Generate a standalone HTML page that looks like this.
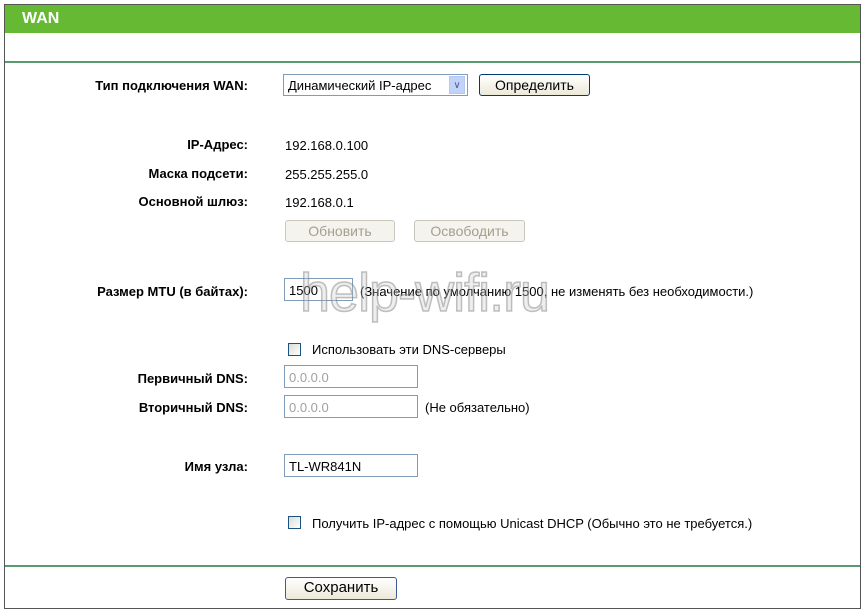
<!DOCTYPE html>
<html><head><meta charset="utf-8"><style>
body{margin:0;width:865px;height:612px;background:#fff;font-family:"Liberation Sans",Arial,sans-serif;font-size:13px;color:#000;position:relative;overflow:hidden}
.a{position:absolute}
.l{position:absolute;right:617px;font-weight:bold;text-align:right;white-space:nowrap}
.v{position:absolute;left:285px;white-space:nowrap}
.in{position:absolute;border:1px solid #7f9db9;background:#fff;box-sizing:border-box;height:23px;padding:4px 0 0 4px;white-space:nowrap}
.btn{position:absolute;box-sizing:border-box;border:1px solid #003c74;border-radius:3px;background:linear-gradient(#fff,#ece9d8);text-align:center;height:22px;line-height:20px;font-size:14px}
.dis{border-color:#c9c7ba;color:#a3a08e;background:#f4f3ee}
.cb{position:absolute;width:11px;height:11px;border:1px solid #1c5180;background:linear-gradient(135deg,#dcdcd6,#fff)}
</style></head><body>
<div class="a" style="left:4px;top:4px;width:855px;height:603px;border:1px solid #555"></div>
<div class="a" style="left:5px;top:5px;width:855px;height:28px;background:#66b933"></div>
<div class="a" style="left:22px;top:10px;color:#fff;font-weight:bold;font-size:16px">WAN</div>
<div class="a" style="left:5px;top:61px;width:855px;height:2px;background:#5a9a6e"></div>
<div class="a" style="left:5px;top:565px;width:855px;height:2px;background:#5a9a6e"></div>

<div class="l" style="top:78px">Тип подключения WAN:</div>
<div class="in" style="left:283px;top:74px;width:185px;height:22px;padding:3px 0 0 4px;font-size:13px">Динамический IP-адрес</div>
<div class="a" style="left:449px;top:76px;width:16px;height:18px;background:#c1d3fb;border:1px solid #b4c8f6;box-sizing:border-box;text-align:center;color:#4d6185;font-size:10px;line-height:17px">&#x2228;</div>
<div class="btn" style="left:479px;top:74px;width:111px">Определить</div>

<div class="l" style="top:137px">IP-Адрес:</div><div class="v" style="top:138px">192.168.0.100</div>
<div class="l" style="top:166px">Маска подсети:</div><div class="v" style="top:167px">255.255.255.0</div>
<div class="l" style="top:194px">Основной шлюз:</div><div class="v" style="top:195px">192.168.0.1</div>
<div class="btn dis" style="left:285px;top:220px;width:110px">Обновить</div>
<div class="btn dis" style="left:414px;top:220px;width:111px">Освободить</div>

<div class="l" style="top:284px">Размер MTU (в байтах):</div>
<div class="in" style="left:284px;top:278px;width:69px">1500</div>
<div class="v" style="left:360px;top:284px">(Значение по умолчанию 1500, не изменять без необходимости.)</div>
<div class="a" style="left:300px;top:262px;font-size:54px;color:rgba(200,200,200,0.3);-webkit-text-stroke:1.5px rgba(120,120,120,0.45);letter-spacing:-1px">help-wifi.ru</div>

<div class="cb" style="left:288px;top:343px"></div>
<div class="v" style="left:312px;top:342px">Использовать эти DNS-серверы</div>
<div class="l" style="top:371px">Первичный DNS:</div>
<div class="in" style="left:284px;top:365px;width:134px;color:#a0a0a0">0.0.0.0</div>
<div class="l" style="top:400px">Вторичный DNS:</div>
<div class="in" style="left:284px;top:395px;width:134px;color:#a0a0a0">0.0.0.0</div>
<div class="v" style="left:425px;top:400px">(Не обязательно)</div>

<div class="l" style="top:459px">Имя узла:</div>
<div class="in" style="left:284px;top:454px;width:134px">TL-WR841N</div>

<div class="cb" style="left:288px;top:516px"></div>
<div class="v" style="left:312px;top:516px">Получить IP-адрес с помощью Unicast DHCP (Обычно это не требуется.)</div>

<div class="btn" style="left:285px;top:577px;width:112px;height:23px;border-color:#3c5a9a;font-size:15px">Сохранить</div>
</body></html>
